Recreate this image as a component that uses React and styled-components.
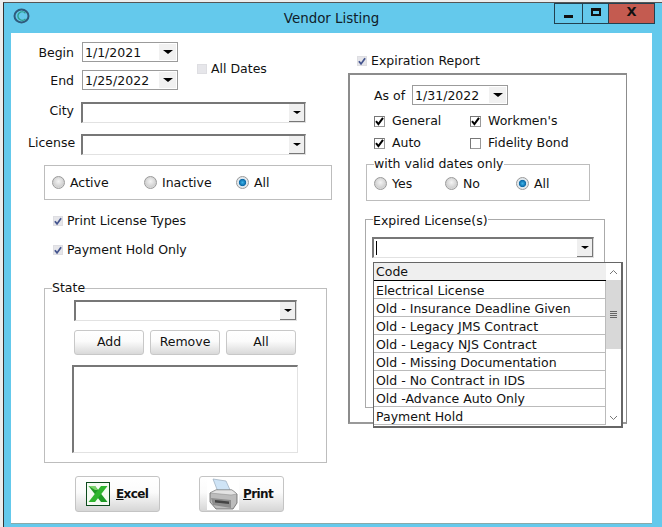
import React from "react";
import styled, { createGlobalStyle } from "styled-components";

const Global = createGlobalStyle`
  html, body { margin: 0; padding: 0; background: #ededed; }
  body { font-family: "DejaVu Sans", "Liberation Sans", sans-serif; font-size: 12.5px; color: #111; }
  * { box-sizing: border-box; }
`;

const Page = styled.div`
  width: 662px; height: 527px; overflow: hidden; padding: 2px 0 0 3px; background: #ededed;
`;
const Win = styled.div`
  width: 659px; height: 525px; background: #64c9ec; border-left: 1px solid #333; border-top: 1px solid #555;
  display: flex; flex-direction: column;
`;
const TitleBar = styled.div`
  height: 30px; flex: none; display: grid; grid-template-columns: 1fr auto 1fr; align-items: start; padding-left: 9px;
`;
const TitleIcon = styled.svg` width: 17px; height: 16px; margin-top: 5px; display: block; `;
const Title = styled.div` font-size: 13.4px; line-height: 16px; margin-top: 8px; margin-right: 12px; color: #10202a; `;
const Controls = styled.div` display: flex; justify-self: end; margin-right: 7px; `;
const Ctl = styled.div`
  width: ${p => p.$w}px; height: 21px; border: 1px solid #22404f; border-left-width: ${p => p.$first ? 1 : 0}px;
  background: ${p => p.$close ? "#c45b50" : "#64c9ec"}; display: flex; align-items: center; justify-content: center;
`;
const MinGlyph = styled.span` width: 9px; height: 3px; background: #111; margin-top: 5px; `;
const MaxGlyph = styled.span` width: 10px; height: 8px; border: 2px solid #111; border-top-width: 3px; margin-top: -3px; `;
const CloseGlyph = styled.span` font: bold 13px/12px "DejaVu Sans", sans-serif; color: #111; margin-top: -3px; `;

const Client = styled.div`
  width: 641px; height: 491px; margin-left: 7px; background: #fff; border-bottom: 1px solid #8aa; display: flex; flex: none;
`;
const LeftCol = styled.div` width: 330px; flex: none; padding: 9px 0 0 17px; display: flex; flex-direction: column; `;
const RightCol = styled.div` flex: 1; padding: 20px 0 0 0; display: flex; flex-direction: column; `;

const DateArea = styled.div` display: flex; align-items: center; `;
const DateStack = styled.div` display: flex; flex-direction: column; gap: 8px; `;
const DateRow = styled.div` display: flex; align-items: center; gap: 8px; `;
const Label = styled.div`
  width: 46px; text-align: right; white-space: nowrap; line-height: 16px;
  padding-top: ${p => p.$pt || 0}px; padding-bottom: ${p => p.$pb || 0}px;
`;
const DateBox = styled.div`
  width: 96px; height: 20px; border: 1px solid #9b9b9b; background: #fff; display: flex; align-items: center; justify-content: space-between;
  padding-left: 2px; font-size: 12.5px; line-height: 18px;
`;
const DateText = styled.span` padding-top: 1px; `;
const DateBtn = styled.div`
  width: 17px; height: 16px; margin-right: 1px; background: #f1f1f1; display: flex; align-items: center; justify-content: center;
`;
const Tri = styled.span`
  width: 0; height: 0; border-left: ${p => p.$s || 5}px solid transparent; border-right: ${p => p.$s || 5}px solid transparent;
  border-top: ${p => (p.$s || 5) - 1}px solid #000;
`;
const AllDates = styled.div` margin-left: 19px; margin-top: 5px; `;

const CheckRow = styled.label`
  display: flex; align-items: center; gap: ${p => p.$gap || 4}px; line-height: 16px; white-space: nowrap;
`;
const CheckBoxWrap = styled.span`
  width: ${p => p.$s || 10}px; height: ${p => p.$s || 10}px; flex: none; display: flex; align-items: center; justify-content: center;
  background: ${p => p.$muted ? "#e6e6ea" : "#fff"}; border: 1px solid ${p => p.$muted ? "#dedee2" : "#999"};
  border-top-color: ${p => p.$muted ? "#dedee2" : "#777"}; border-left-color: ${p => p.$muted ? "#dedee2" : "#777"};
`;
const Check = ({ on, muted, size }) => (
  <CheckBoxWrap $muted={muted} $s={size}>
    {on && (
      <svg width="9" height="9" viewBox="0 0 9 9">
        <path d="M1 4.2 L3.4 7.2 L8 0.8" fill="none" stroke={muted ? "#45558f" : "#000"} strokeWidth="2" />
      </svg>
    )}
  </CheckBoxWrap>
);

const FieldRow = styled.div` display: flex; align-items: center; gap: 7px; margin-top: ${p => p.$mt || 0}px; `;
const Combo = styled.div`
  width: ${p => p.$w}px; height: 21px; flex: none; border: 2px solid #777; border-right: 1px solid #ddd; border-bottom: 1px solid #e2e2e2;
  display: flex; justify-content: flex-end; background: #fff; position: relative;
`;
const ComboBtn = styled.div`
  width: 16px; height: 18px; background: #efefef; border-right: 1px solid #777; border-bottom: 1px solid #777;
  display: flex; align-items: center; justify-content: center;
`;
const Caret = styled.span` position: absolute; left: 2px; top: 2px; width: 1px; height: 14px; background: #000; `;

const GroupBox = styled.div`
  margin: 10px 0 0 16px; width: 288px; height: 35px; border: 1px solid #bdbdbd; display: flex; align-items: center; padding-left: 7px;
`;
const RadioWrap = styled.label`
  display: flex; align-items: center; gap: 6px; width: ${p => p.$w}px; flex: none; line-height: 18px;
`;
const RadioDot = styled.span`
  width: 13px; height: 13px; margin-right: -1px; border-radius: 50%; border: 1px solid #9a9a9a; flex: none;
  background: ${p => p.$on
    ? "radial-gradient(circle at 50% 50%, #3cb4ea 0, #0b6aa8 42%, #dfe8ee 52%, #e8e8e8 100%)"
    : "radial-gradient(circle at 50% 40%, #f4f4f4 0, #d2d2d2 60%, #eee 100%)"};
`;
const Radio = ({ on, w, children }) => (
  <RadioWrap $w={w}><RadioDot $on={on} /><RadioText>{children}</RadioText></RadioWrap>
);
const RadioText = styled.span` padding-top: 1px; `;
const OptRow = styled.div` margin: ${p => p.$mt}px 0 0 ${p => p.$ml}px; `;
const RadioLine = styled.div` display: flex; align-items: center; padding-top: 2px; `;

const Fieldset = styled.fieldset`
  margin: ${p => p.$m}; padding: ${p => p.$p}; width: ${p => p.$w}px; height: ${p => p.$h}px;
  border: 1px solid ${p => p.$c || "#bdbdbd"}; min-width: 0; display: block; position: relative;
`;
const Legend = styled.legend`
  padding: 0; margin-left: ${p => p.$ml}px; line-height: ${p => p.$lh || 16}px; font-size: 12.5px; height: 16px;
`;
const BtnRow = styled.div` display: flex; gap: 6px; margin-top: 9px; `;
const Btn = styled.div`
  width: 70px; height: 25px; border: 1px solid #c8c8c8; border-radius: 3px; text-align: center; line-height: 22px;
  background: linear-gradient(#fff 0, #fbfbfb 45%, #d9d9d9 100%);
`;
const ListBox = styled.div`
  width: 226px; height: 88px; margin: 10px 0 0 -2px; border: 2px solid #777; border-right: 1px solid #e2e2e2; border-bottom: 1px solid #e2e2e2; background: #fff;
`;
const Actions = styled.div` display: flex; gap: 39px; margin: 13px 0 0 47px; `;
const ActionBtn = styled.div`
  width: 85px; height: 36px; border: 1px solid #c4c4c4; border-radius: 3px; display: flex; align-items: center; gap: ${p => p.$gap}px; padding-left: ${p => p.$pl}px;
  background: linear-gradient(#fff 0, #fbfbfb 45%, #d6d6d6 100%); font-weight: bold; font-size: 12px; letter-spacing: -0.6px;
`;
const Under = styled.span` text-decoration: underline; `;

const ReportBox = styled.div`
  width: 279px; height: 351px; margin: 4px 0 0 7px; border: 2px solid #8c8c8c; border-right-width: 1px; border-bottom-color: #999; padding: 10px 0 0 24px;
  display: flex; flex-direction: column;
`;
const AsOfRow = styled.div` display: flex; align-items: center; gap: 7px; `;
const TwoChecks = styled.div` display: grid; grid-template-columns: 96px auto; row-gap: 6px; margin-top: 8px; `;
const Dropdown = styled.div`
  position: absolute; left: 7px; top: 35px; width: 250px; height: 166px; border: 2px solid #666; border-top-width: 1px; border-left-width: 1px;
  background: #fff; display: flex;
`;
const Rows = styled.div` width: 232px; flex: none; display: flex; flex-direction: column; `;
const HeadRow = styled.div`
  height: 18px; background: #efefef; border-bottom: 1px solid #000; line-height: 18px; padding-left: 2px;
`;
const Row = styled.div`
  height: 18px; border-bottom: 1px solid #bbb; line-height: 20px; padding-left: 2px; white-space: nowrap; border-right: 1px solid #bbb;
`;
const Scroll = styled.div` flex: 1; display: flex; flex-direction: column; align-items: stretch; `;
const Arrow = styled.div` height: 17px; flex: none; display: flex; align-items: center; justify-content: center; `;
const Thumb = styled.div`
  height: 69px; flex: none; background: #d8d8d8; display: flex; flex-direction: column; gap: 1px; align-items: center; justify-content: center;
`;
const Grip = styled.span` width: 7px; height: 1px; background: #666; `;
const Track = styled.div` flex: 1; `;

const rows = [
  "Electrical License", "Old - Insurance Deadline Given", "Old - Legacy JMS Contract", "Old - Legacy NJS Contract",
  "Old - Missing Documentation", "Old - No Contract in IDS", "Old -Advance Auto Only", "Payment Hold",
];

const Swirl = () => (
  <TitleIcon viewBox="0 0 17 16">
    <ellipse cx="8.5" cy="8" rx="7" ry="6.4" fill="none" stroke="#2f5b7c" strokeWidth="2" />
    <path d="M12.5 5.2 A4.4 4.2 0 1 0 12.5 11" fill="none" stroke="#2e9e8c" strokeWidth="1.4" />
  </TitleIcon>
);
const ExcelIcon = () => (
  <svg width="24" height="24" viewBox="0 0 24 24">
    <rect x="0.5" y="0.5" width="23" height="23" fill="#f4fbf2" stroke="#0c4a1c" />
    <path d="M2.5 4 H9 L21.5 20 H15 Z" fill="#1f9a25" />
    <path d="M21.5 4 H15 L2.5 20 H9 Z" fill="#2fb52e" />
    <path d="M2.5 4 H9 L12 8 L9 8 Z" fill="#7bd36b" />
  </svg>
);
const PrinterIcon = () => (
  <svg width="32" height="32" viewBox="0 0 32 32">
    <rect width="32" height="32" fill="#fff" />
    <path d="M6 1 L19 3 L24 14 L11 14 Z" fill="#cfe4f6" stroke="#9ab" strokeWidth="0.7" />
    <path d="M3 15 L9 12 H25 L30 16 V25 L26 31 H9 L3 24 Z" fill="#bcbcbc" stroke="#666" strokeWidth="0.8" />
    <path d="M3 15 L24 17 L30 16 L25 12 H9 Z" fill="#e3e3e3" stroke="#888" strokeWidth="0.5" />
    <path d="M4 20 L24 22 V30 L6 27 Z" fill="#8d8d8d" />
    <path d="M8 22 L22 23.5 V26 L8 24.5 Z" fill="#444" />
  </svg>
);

export default function App() {
  return (
    <>
      <Global />
      <Page>
        <Win>
          <TitleBar>
            <Swirl />
            <Title>Vendor Listing</Title>
            <Controls>
              <Ctl $w={29} $first><MinGlyph /></Ctl>
              <Ctl $w={26}><MaxGlyph /></Ctl>
              <Ctl $w={46} $close><CloseGlyph>X</CloseGlyph></Ctl>
            </Controls>
          </TitleBar>
          <Client>
            <LeftCol>
              <DateArea>
                <DateStack>
                  <DateRow><Label $pt={2}>Begin</Label><DateBox><DateText>1/1/2021</DateText><DateBtn><Tri /></DateBtn></DateBox></DateRow>
                  <DateRow><Label $pt={2}>End</Label><DateBox><DateText>1/25/2022</DateText><DateBtn><Tri /></DateBtn></DateBox></DateRow>
                </DateStack>
                <AllDates><CheckRow $gap={4}><Check muted />All Dates</CheckRow></AllDates>
              </DateArea>
              <FieldRow $mt={12}><Label $pb={3}>City</Label><Combo $w={225}><ComboBtn><Tri $s={4} /></ComboBtn></Combo></FieldRow>
              <FieldRow $mt={11}><Label $pb={3}>License</Label><Combo $w={225}><ComboBtn><Tri $s={4} /></ComboBtn></Combo></FieldRow>
              <GroupBox>
                <Radio w={92}>Active</Radio>
                <Radio w={92}>Inactive</Radio>
                <Radio on w={40}>All</Radio>
              </GroupBox>
              <OptRow $mt={13} $ml={25}><CheckRow><Check muted on />Print License Types</CheckRow></OptRow>
              <OptRow $mt={13} $ml={25}><CheckRow><Check muted on />Payment Hold Only</CheckRow></OptRow>
              <Fieldset $m="22px 0 0 16px" $p="4px 0 0 29px" $w={283} $h={183}>
                <Legend $ml={-22}>State</Legend>
                <Combo $w={223}><ComboBtn><Tri $s={4} /></ComboBtn></Combo>
                <BtnRow><Btn>Add</Btn><Btn>Remove</Btn><Btn>All</Btn></BtnRow>
                <ListBox />
              </Fieldset>
              <Actions>
                <ActionBtn $pl={10} $gap={6}><ExcelIcon /><span><Under>E</Under>xcel</span></ActionBtn>
                <ActionBtn $pl={7} $gap={4}><PrinterIcon /><span><Under>P</Under>rint</span></ActionBtn>
              </Actions>
            </LeftCol>
            <RightCol>
              <OptRow $mt={0} $ml={16}><CheckRow><Check muted on />Expiration Report</CheckRow></OptRow>
              <ReportBox>
                <AsOfRow><span>As of</span><DateBox><DateText>1/31/2022</DateText><DateBtn><Tri /></DateBtn></DateBox></AsOfRow>
                <TwoChecks>
                  <CheckRow $gap={7}><Check on size={11} />General</CheckRow>
                  <CheckRow $gap={7}><Check on size={11} />Workmen's</CheckRow>
                  <CheckRow $gap={7}><Check on size={11} />Auto</CheckRow>
                  <CheckRow $gap={7}><Check size={11} />Fidelity Bond</CheckRow>
                </TwoChecks>
                <Fieldset $m="5px 0 0 -8px" $p="0 0 0 7px" $w={224} $h={45}>
                  <Legend $ml={0}>with valid dates only</Legend>
                  <RadioLine>
                    <Radio w={71}>Yes</Radio>
                    <Radio w={71}>No</Radio>
                    <Radio on w={50}>All</Radio>
                  </RadioLine>
                </Fieldset>
                <Fieldset $m="10px 0 0 -9px" $p="10px 0 0 6px" $w={240} $h={197} $c="#aaa">
                  <Legend $ml={1} $lh={19}>Expired License(s)</Legend>
                  <Combo $w={222}><Caret /><ComboBtn><Tri $s={4} /></ComboBtn></Combo>
                  <Dropdown>
                    <Rows>
                      <HeadRow>Code</HeadRow>
                      {rows.map(r => <Row key={r}>{r}</Row>)}
                    </Rows>
                    <Scroll>
                      <Arrow><svg width="9" height="6" viewBox="0 0 9 6"><path d="M1 5 L4.5 1.5 L8 5" fill="none" stroke="#777" /></svg></Arrow>
                      <Thumb><Grip /><Grip /><Grip /><Grip /></Thumb>
                      <Track />
                      <Arrow><svg width="9" height="6" viewBox="0 0 9 6"><path d="M1 1 L4.5 4.5 L8 1" fill="none" stroke="#777" /></svg></Arrow>
                    </Scroll>
                  </Dropdown>
                </Fieldset>
              </ReportBox>
            </RightCol>
          </Client>
        </Win>
      </Page>
    </>
  );
}
